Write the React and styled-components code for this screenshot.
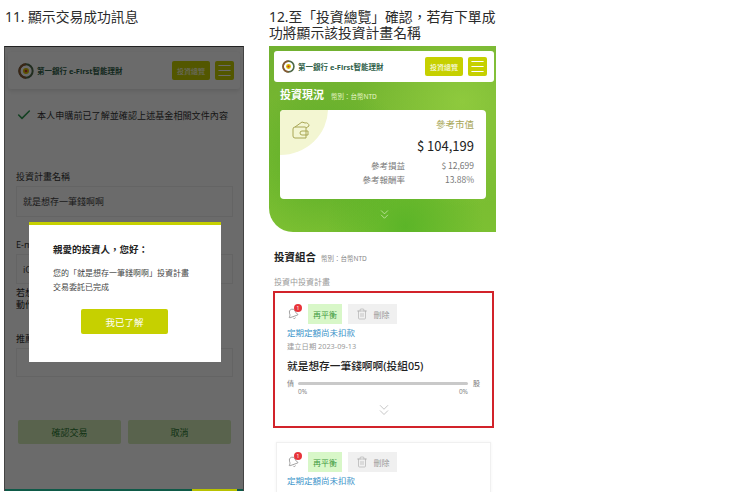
import React from "react";
import styled, { createGlobalStyle } from "styled-components";
import { Bell, Trash2, ChevronsDown, Check, Menu } from "lucide-react";

const Global = createGlobalStyle`
  html, body { margin: 0; padding: 0; background: #fff; }
  body { font-family: "Noto Sans", "Noto Sans CJK TC", sans-serif; }
  * { box-sizing: border-box; }
`;
const Page = styled.div`
  width: 750px; height: 492px; overflow: hidden; display: flex; align-items: flex-start; background: #fff;
`;
const LeftCol = styled.section`
  width: 240px; margin-left: 4px; flex: none;
`;
const RightCol = styled.section`
  width: 227px; margin-left: 25px; flex: none;
`;
const Caption = styled.h2`
  margin: 0; font-weight: 400; font-size: 13.8px; line-height: 16px; color: #2a2a2a; padding-top: ${p => p.$top}px; height: ${p => p.$h}px; padding-left: ${p => p.$left || 0}px;
  width: ${p => p.$w}px;
  font-family: "Noto Sans", "Noto Sans CJK TC", sans-serif;
`;
const Phone = styled.div`
  position: relative; height: 445px; overflow: hidden; background: #fff;
  border: 1px solid #444; border-top: 1px solid #222; border-bottom: none;
  padding: 5px 3px 0;
`;
const Dim = styled.div`
  position: absolute; inset: 0; background: rgba(0,0,0,.58);
`;
const HeaderBar = styled.header`
  display: flex; align-items: center; height: ${p => p.$h}px; background: #fff; border-radius: 3px;
  padding: 0 ${p => p.$pr}px 0 ${p => p.$pl}px; box-shadow: ${p => p.$shadow ? "0 2px 5px rgba(0,0,0,.12)" : "none"};
`;
const BrandName = styled.span`
  margin-left: 3px; font-size: 7.5px; font-weight: 700; color: #2f5f4a; white-space: nowrap; flex: 1;
`;
const OverviewBtn = styled.div`
  width: 38px; height: 19px; border-radius: 2px; background: #c6d000; color: #fff; font-size: 7px;
  display: flex; align-items: center; justify-content: center; white-space: nowrap;
`;
const MenuBtn = styled.div`
  width: 19px; height: 19px; margin-left: 5px; border-radius: 2px; background: #c6d000; color: #fff;
  display: flex; align-items: center; justify-content: center;
`;
const Agree = styled.div`
  display: flex; align-items: center; gap: 5px; margin: 16px 0 0 8px; height: 20px; font-size: 9.1px; color: #333; white-space: nowrap;
`;
const Form = styled.div`
  padding: 0 7px 0 8px;
`;
const Label = styled.div`
  font-size: 9px; line-height: 12px; color: #333; margin-top: ${p => p.$mt}px;
`;
const Field = styled.div`
  height: ${p => p.$h}px; margin-top: 3px; border: 1px solid #eee; padding: 0 6px; font-size: 9px; color: #444;
  display: flex; align-items: center; white-space: nowrap; overflow: hidden;
`;
const Note = styled.div`
  font-size: 9px; line-height: 12px; color: #222; margin-top: 3px;
`;
const FormActions = styled.div`
  display: flex; gap: 7px; margin: 43px 2px 0;
`;
const GhostBtn = styled.div`
  flex: 1; height: 24px; border-radius: 2px; background: #d3ecb8; color: #2d7a32; font-size: 9px;
  display: flex; align-items: center; justify-content: center;
`;
const BottomBar = styled.div`
  position: absolute; left: 0; right: 0; bottom: 0; height: 2px; background: #0e5a48;
  display: flex; justify-content: flex-end; padding-right: 6px;
`;
const BottomAccent = styled.div`
  width: 45px; height: 2px; background: #b8c200;
`;
const Modal = styled.div`
  position: absolute; left: 24px; top: 175px; width: 192px; height: 140px; background: #fff;
  border-top: 3px solid #c6d000; padding: 18px 24px 0;
`;
const ModalTitle = styled.div`
  font-size: 9.5px; font-weight: 700; line-height: 14px; color: #222; white-space: nowrap;
`;
const ModalText = styled.div`
  font-size: 8px; line-height: 14px; margin-top: 9px; color: #444; white-space: nowrap;
`;
const ModalBtn = styled.div`
  width: 87px; height: 25px; margin: 15px 0 0 28px; border-radius: 2px; background: #c6d000; color: #fff; font-size: 9.5px;
  display: flex; align-items: center; justify-content: center;
`;
const Hero = styled.div`
  height: 186px; margin-top: 5px; padding: 5px 2px 0 5px; border-bottom-left-radius: 24px;
  background:
    radial-gradient(circle at 25% 62%, rgba(60,160,30,.5), transparent 40%),
    radial-gradient(circle at 85% 30%, rgba(160,215,70,.6), transparent 45%),
    radial-gradient(circle at 60% 97%, rgba(60,170,30,.5), transparent 35%),
    linear-gradient(180deg, #71b130 0%, #7cc032 100%);
`;
const HeroTitle = styled.div`
  display: flex; align-items: baseline; gap: 7px; margin: 4px 0 0 6px; height: 18px; color: #fff; font-size: 11px; font-weight: 700; white-space: nowrap;
`;
const Unit = styled.span`
  font-size: 6.5px; font-weight: 400; color: ${p => p.$c};
`;
const ValueCard = styled.div`
  position: relative; overflow: hidden; height: 89px; width: 206px; margin: 6px 0 0 6px; background: #fff; border-radius: 4px; padding: 8px 12px 0;
  color: #555; text-align: right;
`;
const Quarter = styled.div`
  position: absolute; left: -48px; top: -47px; width: 96px; height: 92px; border-radius: 50%; background: #f3f6d2;
`;
const Wallet = styled.svg`
  position: absolute; left: 11px; top: 10px;
`;
const ValueLabel = styled.div`
  position: relative; font-size: 9.5px; line-height: 14px; color: #a8a655;
`;
const ValueNum = styled.div`
  position: relative; font-family: "Noto Sans CJK TC", "Noto Sans", sans-serif; font-size: 13px; line-height: 20px; margin-top: 4px; color: #222;
`;
const StatRow = styled.div`
  position: relative; display: grid; grid-template-columns: 1fr 69px; font-family: "Noto Sans CJK TC", "Noto Sans", sans-serif; font-size: 8.5px; line-height: 14px; color: #777; margin-top: ${p => p.$mt}px;
`;
const HeroChevron = styled.div`
  display: flex; justify-content: center; margin: 8px 0 0 0; color: #e6f5cf;
`;
const SectionTitle = styled.div`
  display: flex; align-items: baseline; gap: 5px; margin: 17px 0 0 5px; height: 17px; font-size: 10.5px; font-weight: 700; color: #222; white-space: nowrap;
`;
const SubTitle = styled.div`
  margin: 10px 0 0 5px; font-size: 8px; line-height: 12px; color: #999; height: 13px;
`;
const PlanCard = styled.article`
  margin: ${p => p.$mt}px ${p => p.$mr}px 0 ${p => p.$ml}px;
  border: ${p => p.$active ? "2px solid #d2232a" : "1px solid #f0f0f0"};
  padding: ${p => p.$active ? "11px 12px 0 12px" : "9px 10px 0 10px"};
  height: ${p => p.$h}px;
  box-shadow: ${p => p.$active ? "none" : "0 0 3px rgba(0,0,0,.05)"};
`;
const PlanActions = styled.div`
  display: flex; align-items: center; height: 20px;
`;
const BellWrap = styled.div`
  position: relative; width: 21px; height: 20px; color: #888; display: flex; align-items: center;
  svg { transform: rotate(-20deg); }
`;
const Badge = styled.span`
  position: absolute; left: 7px; top: 0; width: 8px; height: 8px; border-radius: 50%; background: #e8343a; color: #fff; font-size: 5px; line-height: 8px; text-align: center;
`;
const Rebalance = styled.div`
  width: 34px; height: 20px; background: #d8f7c8; color: #3f9a3f; font-size: 8px; display: flex; align-items: center; justify-content: center; white-space: nowrap;
`;
const Remove = styled.div`
  width: 49px; height: 20px; margin-left: 6px; background: #f0f0f0; color: #999; font-size: 8px; display: flex; align-items: center; justify-content: center; gap: 6px;
`;
const Status = styled.div`
  margin-top: 3px; font-size: 8.5px; line-height: 12px; color: #3a93c9; white-space: nowrap;
`;
const Created = styled.div`
  margin-top: 1px; font-size: 7.3px; line-height: 13px; color: #999; white-space: nowrap;
`;
const PlanName = styled.div`
  margin-top: 5px; font-size: 10.7px; font-weight: 500; line-height: 16px; color: #222; white-space: nowrap;
`;
const Ratio = styled.div`
  display: grid; grid-template-columns: 11px 1fr 12px; align-items: center; margin-top: 5px; font-size: 7px; line-height: 9px; color: #777;
  span:last-child { text-align: right; }
`;
const RatioTrack = styled.div`
  height: 3px; background: #c9c9c9; border-radius: 2px;
`;
const RatioLabels = styled.div`
  display: flex; justify-content: space-between; margin: 0 12px 0 11px; font-size: 6.5px; line-height: 7px; color: #888;
`;
const PlanChevron = styled.div`
  display: flex; justify-content: center; margin-top: 6px; color: #aaa;
`;

const Logo = ({ size }) => (
  <svg width={size} height={size} viewBox="0 0 24 24" aria-hidden="true">
    <circle cx="12" cy="12" r="10" fill="none" stroke="#4f6b4a" strokeWidth="3" />
    <path d="M12 2a10 10 0 0 0 0 20" fill="none" stroke="#8a5a32" strokeWidth="3" />
    <circle cx="12" cy="12" r="4.5" fill="#d8c000" />
    <circle cx="12" cy="12" r="2" fill="#c7332c" />
  </svg>
);

const SiteHeader = ({ h, pl, pr, shadow, logo }) => (
  <HeaderBar $h={h} $pl={pl} $pr={pr} $shadow={shadow}>
    <Logo size={logo} />
    <BrandName>第一銀行 e-First智能理財</BrandName>
    <OverviewBtn>投資總覽</OverviewBtn>
    <MenuBtn><Menu size={17} strokeWidth={1.6} /></MenuBtn>
  </HeaderBar>
);

const PlanBody = () => (
  <>
    <PlanActions>
      <BellWrap>
        <Bell size={12} strokeWidth={1.4} />
        <Badge>1</Badge>
      </BellWrap>
      <Rebalance>再平衡</Rebalance>
      <Remove><Trash2 size={12} strokeWidth={1} />刪除</Remove>
    </PlanActions>
    <Status>定期定額尚未扣款</Status>
  </>
);

export default function App() {
  return (
    <Page>
      <Global />
      <LeftCol>
        <Caption $top={9} $h={46} $left={1}>11. 顯示交易成功訊息</Caption>
        <Phone>
          <SiteHeader h={37} pl={10} pr={6} shadow logo={16} />
          <Agree>
            <Check size={16} color="#2f9a52" strokeWidth={2.4} />
            本人申購前已了解並確認上述基金相關文件內容
          </Agree>
          <Form>
            <Label $mt={46}>投資計畫名稱</Label>
            <Field $h={31}>就是想存一筆錢啊啊</Field>
            <Label $mt={22}>E-mail</Label>
            <Field $h={30}>iCloud</Field>
            <Note>若想<br />動作</Note>
            <Label $mt={22}>推薦</Label>
            <Field $h={29} />
            <FormActions>
              <GhostBtn>確認交易</GhostBtn>
              <GhostBtn>取消</GhostBtn>
            </FormActions>
          </Form>
          <Dim />
          <BottomBar><BottomAccent /></BottomBar>
          <Modal>
            <ModalTitle>親愛的投資人，您好：</ModalTitle>
            <ModalText>
              您的「就是想存一筆錢啊啊」投資計畫<br />交易委託已完成
            </ModalText>
            <ModalBtn>我已了解</ModalBtn>
          </Modal>
        </Phone>
      </LeftCol>
      <RightCol>
        <Caption $top={9} $h={41} $w={232}>12.至「投資總覽」確認，若有下單成功將顯示該投資計畫名稱</Caption>
        <Hero>
          <SiteHeader h={31} pl={8} pr={7} logo={13} />
          <HeroTitle>投資現況<Unit $c="#e6f5c9">幣別：台幣NTD</Unit></HeroTitle>
          <ValueCard>
            <Quarter />
            <Wallet width="20" height="20" viewBox="0 0 20 20" fill="none" stroke="#a8a655" strokeWidth="1">
              <path d="M2 9a2 2 0 0 1 2-2h10a1 1 0 0 1 1 1v10H4a2 2 0 0 1-2-2z" />
              <path d="M4 7l7-5 3 1a3 3 0 0 1 4 3l-3 2" />
              <path d="M11 11h6v4h-6a2 2 0 0 1 0-4z" />
            </Wallet>
            <ValueLabel>參考市值</ValueLabel>
            <ValueNum>$ 104,199</ValueNum>
            <StatRow $mt={2}><span>參考損益</span><span>$ 12,699</span></StatRow>
            <StatRow $mt={0}><span>參考報酬率</span><span>13.88%</span></StatRow>
          </ValueCard>
          <HeroChevron><ChevronsDown size={15} strokeWidth={1} /></HeroChevron>
        </Hero>
        <SectionTitle>投資組合<Unit $c="#888">幣別：台幣NTD</Unit></SectionTitle>
        <SubTitle>投資中投資計畫</SubTitle>
        <PlanCard $active $mt={2} $ml={4} $mr={2} $h={137}>
          <PlanBody />
          <Created>建立日期 2023-09-13</Created>
          <PlanName>就是想存一筆錢啊啊(投組05)</PlanName>
          <Ratio><span>債</span><RatioTrack /><span>股</span></Ratio>
          <RatioLabels><span>0%</span><span>0%</span></RatioLabels>
          <PlanChevron><ChevronsDown size={18} strokeWidth={0.9} /></PlanChevron>
        </PlanCard>
        <PlanCard $mt={14} $ml={7} $mr={5} $h={60}>
          <PlanBody />
        </PlanCard>
      </RightCol>
    </Page>
  );
}
